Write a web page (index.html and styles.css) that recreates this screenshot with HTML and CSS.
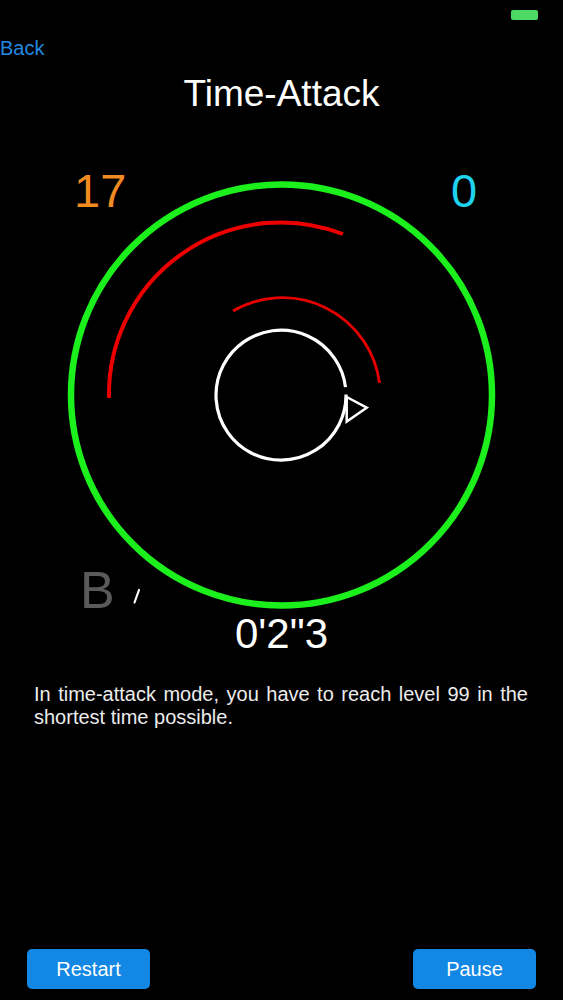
FILE: index.html
```html
<!DOCTYPE html>
<html lang="en">
<head>
<meta charset="utf-8">
<title>Time-Attack</title>
<link rel="stylesheet" href="styles.css">
</head>
<body>
<div class="status-bar"><span class="battery"></span></div>
<nav class="nav"><a class="back" href="#">Back</a></nav>
<h1 class="title">Time-Attack</h1>
<section class="board">
  <svg class="board-canvas" width="563" height="510" viewBox="0 150 563 510" aria-hidden="true">
    <circle cx="281.5" cy="395" r="210.5" fill="none" stroke="#1cf01c" stroke-width="6.5"/>
    <path d="M 109 398 A 172 172 0 0 1 343 234" fill="none" stroke="#ec0000" stroke-width="4"/>
    <path d="M 233 311 A 98 98 0 0 1 379.5 383" fill="none" stroke="#e40000" stroke-width="2.8"/>
    <path d="M 346 394.5 A 65 65 0 1 1 345.5 387.1" fill="none" stroke="#ffffff" stroke-width="3.2"/>
    <polygon points="346.7,397 366.7,407.7 346.7,421.5" fill="none" stroke="#ffffff" stroke-width="2.5" stroke-linejoin="miter"/>
    <line x1="139" y1="590" x2="134.5" y2="602.5" stroke="#ffffff" stroke-width="2.2" stroke-linecap="round"/>
  </svg>
  <span class="score score-left">17</span>
  <span class="score score-right">0</span>
  <span class="rank">B</span>
  <span class="timer">0'2"3</span>
</section>
<p class="desc">In time-attack mode, you have to reach level 99 in the shortest time possible.</p>
<footer class="controls">
  <button class="btn">Restart</button>
  <button class="btn">Pause</button>
</footer>
</body>
</html>
```
FILE: styles.css
```css
html, body {
  margin: 0;
  padding: 0;
  background: #000;
}
body {
  width: 563px;
  height: 1000px;
  display: flex;
  flex-direction: column;
  font-family: "Liberation Sans", Arial, sans-serif;
  color: #fff;
  overflow: hidden;
}
.status-bar {
  height: 30px;
  display: flex;
  justify-content: flex-end;
  align-items: flex-start;
  padding-right: 25px;
}
.battery {
  display: block;
  margin-top: 10px;
  width: 27px;
  height: 10px;
  border-radius: 2px;
  background: #4cd964;
}
.nav {
  margin-top: 6px;
  height: 24px;
  display: flex;
}
.back {
  font-size: 20px;
  line-height: 24px;
  color: #2388e0;
  text-decoration: none;
}
.title {
  margin: 12px 0 0;
  height: 44px;
  font-size: 37px;
  line-height: 44px;
  font-weight: normal;
  text-align: center;
  color: #fff;
}
.board {
  position: relative;
  margin-top: 34px;
  width: 563px;
  height: 510px;
  flex: none;
}
.board-canvas {
  display: block;
}
.score {
  position: absolute;
  top: 17px;
  font-size: 47px;
  line-height: 47px;
}
.score-left {
  left: 74px;
  color: #f28a22;
}
.score-right {
  left: 451px;
  color: #1fd2ee;
}
.rank {
  position: absolute;
  top: 414px;
  left: 80px;
  font-size: 52px;
  line-height: 52px;
  color: #5a5a5a;
}
.timer {
  position: absolute;
  top: 463px;
  left: 0;
  right: 0;
  text-align: center;
  font-size: 42px;
  line-height: 42px;
  color: #fff;
}
.desc {
  margin: 23px 0 0;
  padding: 0 35px 0 34px;
  font-size: 20px;
  line-height: 23px;
  text-align: justify;
  color: #ececec;
}
.controls {
  margin-top: auto;
  padding: 0 27px 11px;
  display: flex;
  justify-content: space-between;
}
.btn {
  width: 123px;
  height: 40px;
  border: none;
  border-radius: 5px;
  background: #1287e3;
  color: #fff;
  font-family: "Liberation Sans", Arial, sans-serif;
  font-size: 20px;
  padding: 0;
}
```
